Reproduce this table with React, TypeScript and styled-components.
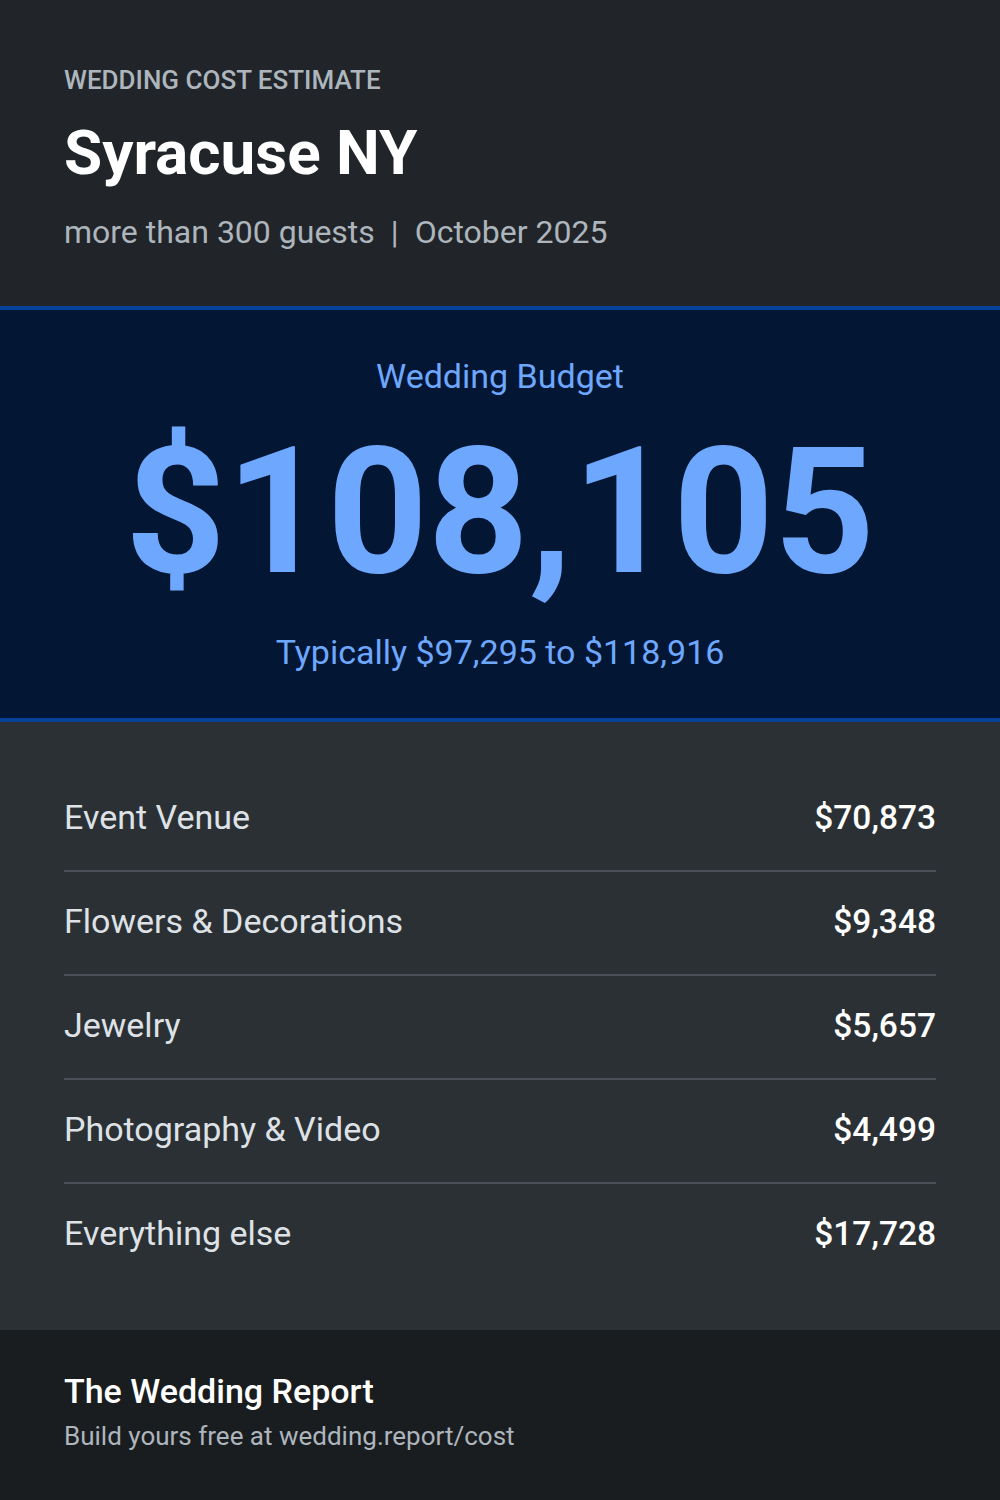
import React from 'react';
import styled, {createGlobalStyle} from 'styled-components';

const GlobalStyle = createGlobalStyle`
	html, body {
		margin     : 0;
		padding    : 0;
		background : #212529;
	}
	body {
		font-family : Roboto, "Liberation Sans", sans-serif;
		color       : #f8f9fa;
	}
`;

const Card = styled.div`
	display        : flex;
	flex-direction : column;
	width          : 1000px;
	height         : 1500px;
`;
const Header = styled.header`
	display        : flex;
	flex-direction : column;
	padding        : 64px 64px 0;
	height         : 306px;
	box-sizing     : border-box;
	background     : #212529;
`;
const Eyebrow = styled.div`
	font-size      : 26px;
	font-weight    : 500;
	color          : #adb5bd;
	text-transform : uppercase;
	line-height    : 32px;
`;
const Title = styled.h1`
	margin      : 20px 0 0;
	font-size   : 62px;
	font-weight : 700;
	line-height : 74px;
	color       : #ffffff;
`;
const Meta = styled.div`
	margin-top  : 22px;
	font-size   : 32px;
	line-height : 40px;
	color       : #adb5bd;
	span {
		margin : 0 16px;
	}
`;
const Budget = styled.section`
	display        : flex;
	flex-direction : column;
	align-items    : center;
	height         : 416px;
	box-sizing     : border-box;
	padding-top    : 46px;
	background     : #031633;
	border-top     : 4px solid #084298;
	border-bottom  : 4px solid #084298;
	color          : #6ea8fe;
`;
const BudgetLabel = styled.div`
	font-size   : 34px;
	line-height : 40px;
`;
const BudgetAmount = styled.div`
	margin-top  : 16px;
	font-size   : 176px;
	font-weight : 700;
	line-height : 200px;
`;
const BudgetRange = styled.div`
	margin-top  : 20px;
	font-size   : 34px;
	line-height : 40px;
`;
const List = styled.section`
	flex           : 1;
	display        : flex;
	flex-direction : column;
	padding        : 46px 64px 0;
	background     : #2b3035;
`;
const Row = styled.div<{ $last?: boolean }>`
	display         : flex;
	justify-content : space-between;
	align-items     : center;
	height          : 104px;
	box-sizing      : border-box;
	padding-bottom  : 4px;
	border-bottom   : 2px solid ${({$last}) => $last ? 'transparent' : '#495057'};
`;
const RowLabel = styled.div`
	font-size : 34px;
	color     : #dee2e6;
`;
const RowValue = styled.div`
	font-size   : 33.5px;
	font-weight : 500;
	color       : #ffffff;
`;
const Footer = styled.footer`
	display        : flex;
	flex-direction : column;
	height         : 170px;
	box-sizing     : border-box;
	padding        : 41px 64px 0;
	background     : #1a1d20;
`;
const Brand = styled.div`
	font-size   : 34px;
	font-weight : 500;
	line-height : 40px;
	color       : #ffffff;
`;
const Tagline = styled.div`
	margin-top  : 9px;
	font-size   : 26px;
	line-height : 32px;
	color       : #adb5bd;
`;

const items = [
	{label: 'Event Venue', value: '$70,873'},
	{label: 'Flowers & Decorations', value: '$9,348'},
	{label: 'Jewelry', value: '$5,657'},
	{label: 'Photography & Video', value: '$4,499'},
	{label: 'Everything else', value: '$17,728'}
];

export default function App() {
	return <>
		<GlobalStyle/>
		<Card>
			<Header>
				<Eyebrow>Wedding Cost Estimate</Eyebrow>
				<Title>Syracuse NY</Title>
				<Meta>more than 300 guests<span>|</span>October 2025</Meta>
			</Header>
			<Budget>
				<BudgetLabel>Wedding Budget</BudgetLabel>
				<BudgetAmount>$108,105</BudgetAmount>
				<BudgetRange>Typically $97,295 to $118,916</BudgetRange>
			</Budget>
			<List>
				{items.map((item, index) => <Row key={item.label} $last={index === items.length - 1}>
					<RowLabel>{item.label}</RowLabel>
					<RowValue>{item.value}</RowValue>
				</Row>)}
			</List>
			<Footer>
				<Brand>The Wedding Report</Brand>
				<Tagline>Build yours free at wedding.report/cost</Tagline>
			</Footer>
		</Card>
	</>;
}
